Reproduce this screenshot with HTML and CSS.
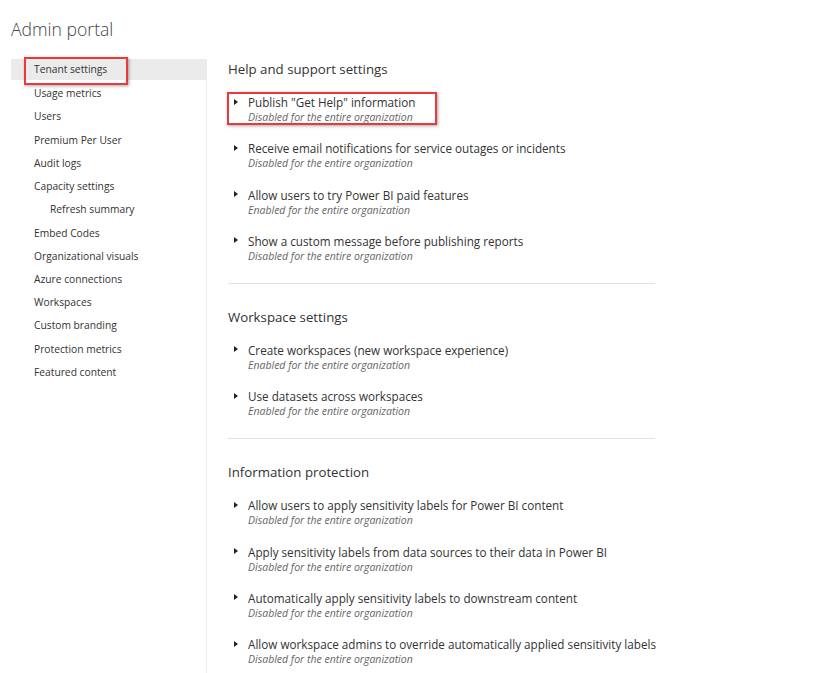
FILE: index.html
```html
<!DOCTYPE html>
<html lang="en">
<head>
<meta charset="utf-8">
<title>Admin portal</title>
<link rel="stylesheet" href="styles.css">
</head>
<body>
<h1 class="page-title">Admin portal</h1>
<div class="layout">
  <nav class="sidebar">
    <div class="nav-item active"><span class="annot annot-nav"></span>Tenant settings</div>
    <div class="nav-item">Usage metrics</div>
    <div class="nav-item">Users</div>
    <div class="nav-item">Premium Per User</div>
    <div class="nav-item">Audit logs</div>
    <div class="nav-item">Capacity settings</div>
    <div class="nav-item sub">Refresh summary</div>
    <div class="nav-item">Embed Codes</div>
    <div class="nav-item">Organizational visuals</div>
    <div class="nav-item">Azure connections</div>
    <div class="nav-item">Workspaces</div>
    <div class="nav-item">Custom branding</div>
    <div class="nav-item">Protection metrics</div>
    <div class="nav-item">Featured content</div>
  </nav>
  <main class="content">
    <section class="section">
      <h2 class="section-title">Help and support settings</h2>
      <div class="items">
        <div class="item"><span class="annot annot-item"></span><span class="caret"></span><div class="item-title">Publish "Get Help" information</div><div class="item-sub">Disabled for the entire organization</div></div>
        <div class="item"><span class="caret"></span><div class="item-title">Receive email notifications for service outages or incidents</div><div class="item-sub">Disabled for the entire organization</div></div>
        <div class="item"><span class="caret"></span><div class="item-title">Allow users to try Power BI paid features</div><div class="item-sub">Enabled for the entire organization</div></div>
        <div class="item"><span class="caret"></span><div class="item-title">Show a custom message before publishing reports</div><div class="item-sub">Disabled for the entire organization</div></div>
      </div>
    </section>
    <section class="section">
      <h2 class="section-title">Workspace settings</h2>
      <div class="items">
        <div class="item"><span class="caret"></span><div class="item-title">Create workspaces (new workspace experience)</div><div class="item-sub">Enabled for the entire organization</div></div>
        <div class="item"><span class="caret"></span><div class="item-title">Use datasets across workspaces</div><div class="item-sub">Enabled for the entire organization</div></div>
      </div>
    </section>
    <section class="section last">
      <h2 class="section-title">Information protection</h2>
      <div class="items">
        <div class="item"><span class="caret"></span><div class="item-title">Allow users to apply sensitivity labels for Power BI content</div><div class="item-sub">Disabled for the entire organization</div></div>
        <div class="item"><span class="caret"></span><div class="item-title">Apply sensitivity labels from data sources to their data in Power BI</div><div class="item-sub">Disabled for the entire organization</div></div>
        <div class="item"><span class="caret"></span><div class="item-title">Automatically apply sensitivity labels to downstream content</div><div class="item-sub">Disabled for the entire organization</div></div>
        <div class="item"><span class="caret"></span><div class="item-title">Allow workspace admins to override automatically applied sensitivity labels</div><div class="item-sub">Disabled for the entire organization</div></div>
      </div>
    </section>
  </main>
</div>
</body>
</html>
```
FILE: styles.css
```css
* { box-sizing: border-box; }
html, body { margin: 0; padding: 0; background: #fff; }
body {
  font-family: "Open Sans", "Noto Sans", "Liberation Sans", sans-serif;
  color: #333;
  height: 673px;
  overflow: hidden;
}
.page-title {
  margin: 0;
  padding: 16px 0 0 11px;
  height: 59px;
  font-size: 17.6px;
  font-weight: 300;
  line-height: 26px;
  color: #444;
}
.layout {
  display: flex;
  height: 614px;
}
.sidebar {
  margin-left: 11px;
  width: 196px;
  border-right: 1px solid #ececec;
  flex-shrink: 0;
}
.nav-item {
  position: relative;
  height: 23.23px;
  line-height: 22px;
  padding-left: 23px;
  font-size: 10.25px;
  color: #333;
  white-space: nowrap;
}
.nav-item.active {
  background: #ebebeb;
  height: 21px;
  line-height: 21px;
  margin-bottom: 2.23px;
}
.nav-item.sub { padding-left: 39px; }
.content {
  padding-left: 21px;
  width: 448px;
}
.section {
  border-bottom: 1px solid #e1e1e1;
  padding-bottom: 20px;
  margin-bottom: 23px;
}
.section.last { border-bottom: none; }
.section-title {
  margin: 0 0 15px 0;
  font-size: 13.25px;
  font-weight: 400;
  line-height: 20px;
  color: #333;
}
.items {
  display: flex;
  flex-direction: column;
  gap: 16.33px;
}
.item {
  position: relative;
  padding-left: 20px;
  height: 30px;
}
.caret {
  position: absolute;
  left: 6px;
  top: 4.5px;
  width: 0;
  height: 0;
  border-top: 3.5px solid transparent;
  border-bottom: 3.5px solid transparent;
  border-left: 4px solid #222;
}
.item-title {
  font-size: 11.7px;
  line-height: 16px;
  color: #333;
  white-space: nowrap;
}
.item-sub {
  font-size: 10.5px;
  line-height: 14px;
  font-style: italic;
  color: #666;
  white-space: nowrap;
}
.annot {
  position: absolute;
  border: 2px solid #e8393b;
  box-shadow: 1px 1px 3px rgba(0,0,0,0.35);
  pointer-events: none;
}
.annot-nav {
  left: 13px;
  top: -2px;
  width: 104px;
  height: 28px;
}
.annot-item {
  left: -1px;
  top: -2px;
  width: 210px;
  height: 33px;
}
```
